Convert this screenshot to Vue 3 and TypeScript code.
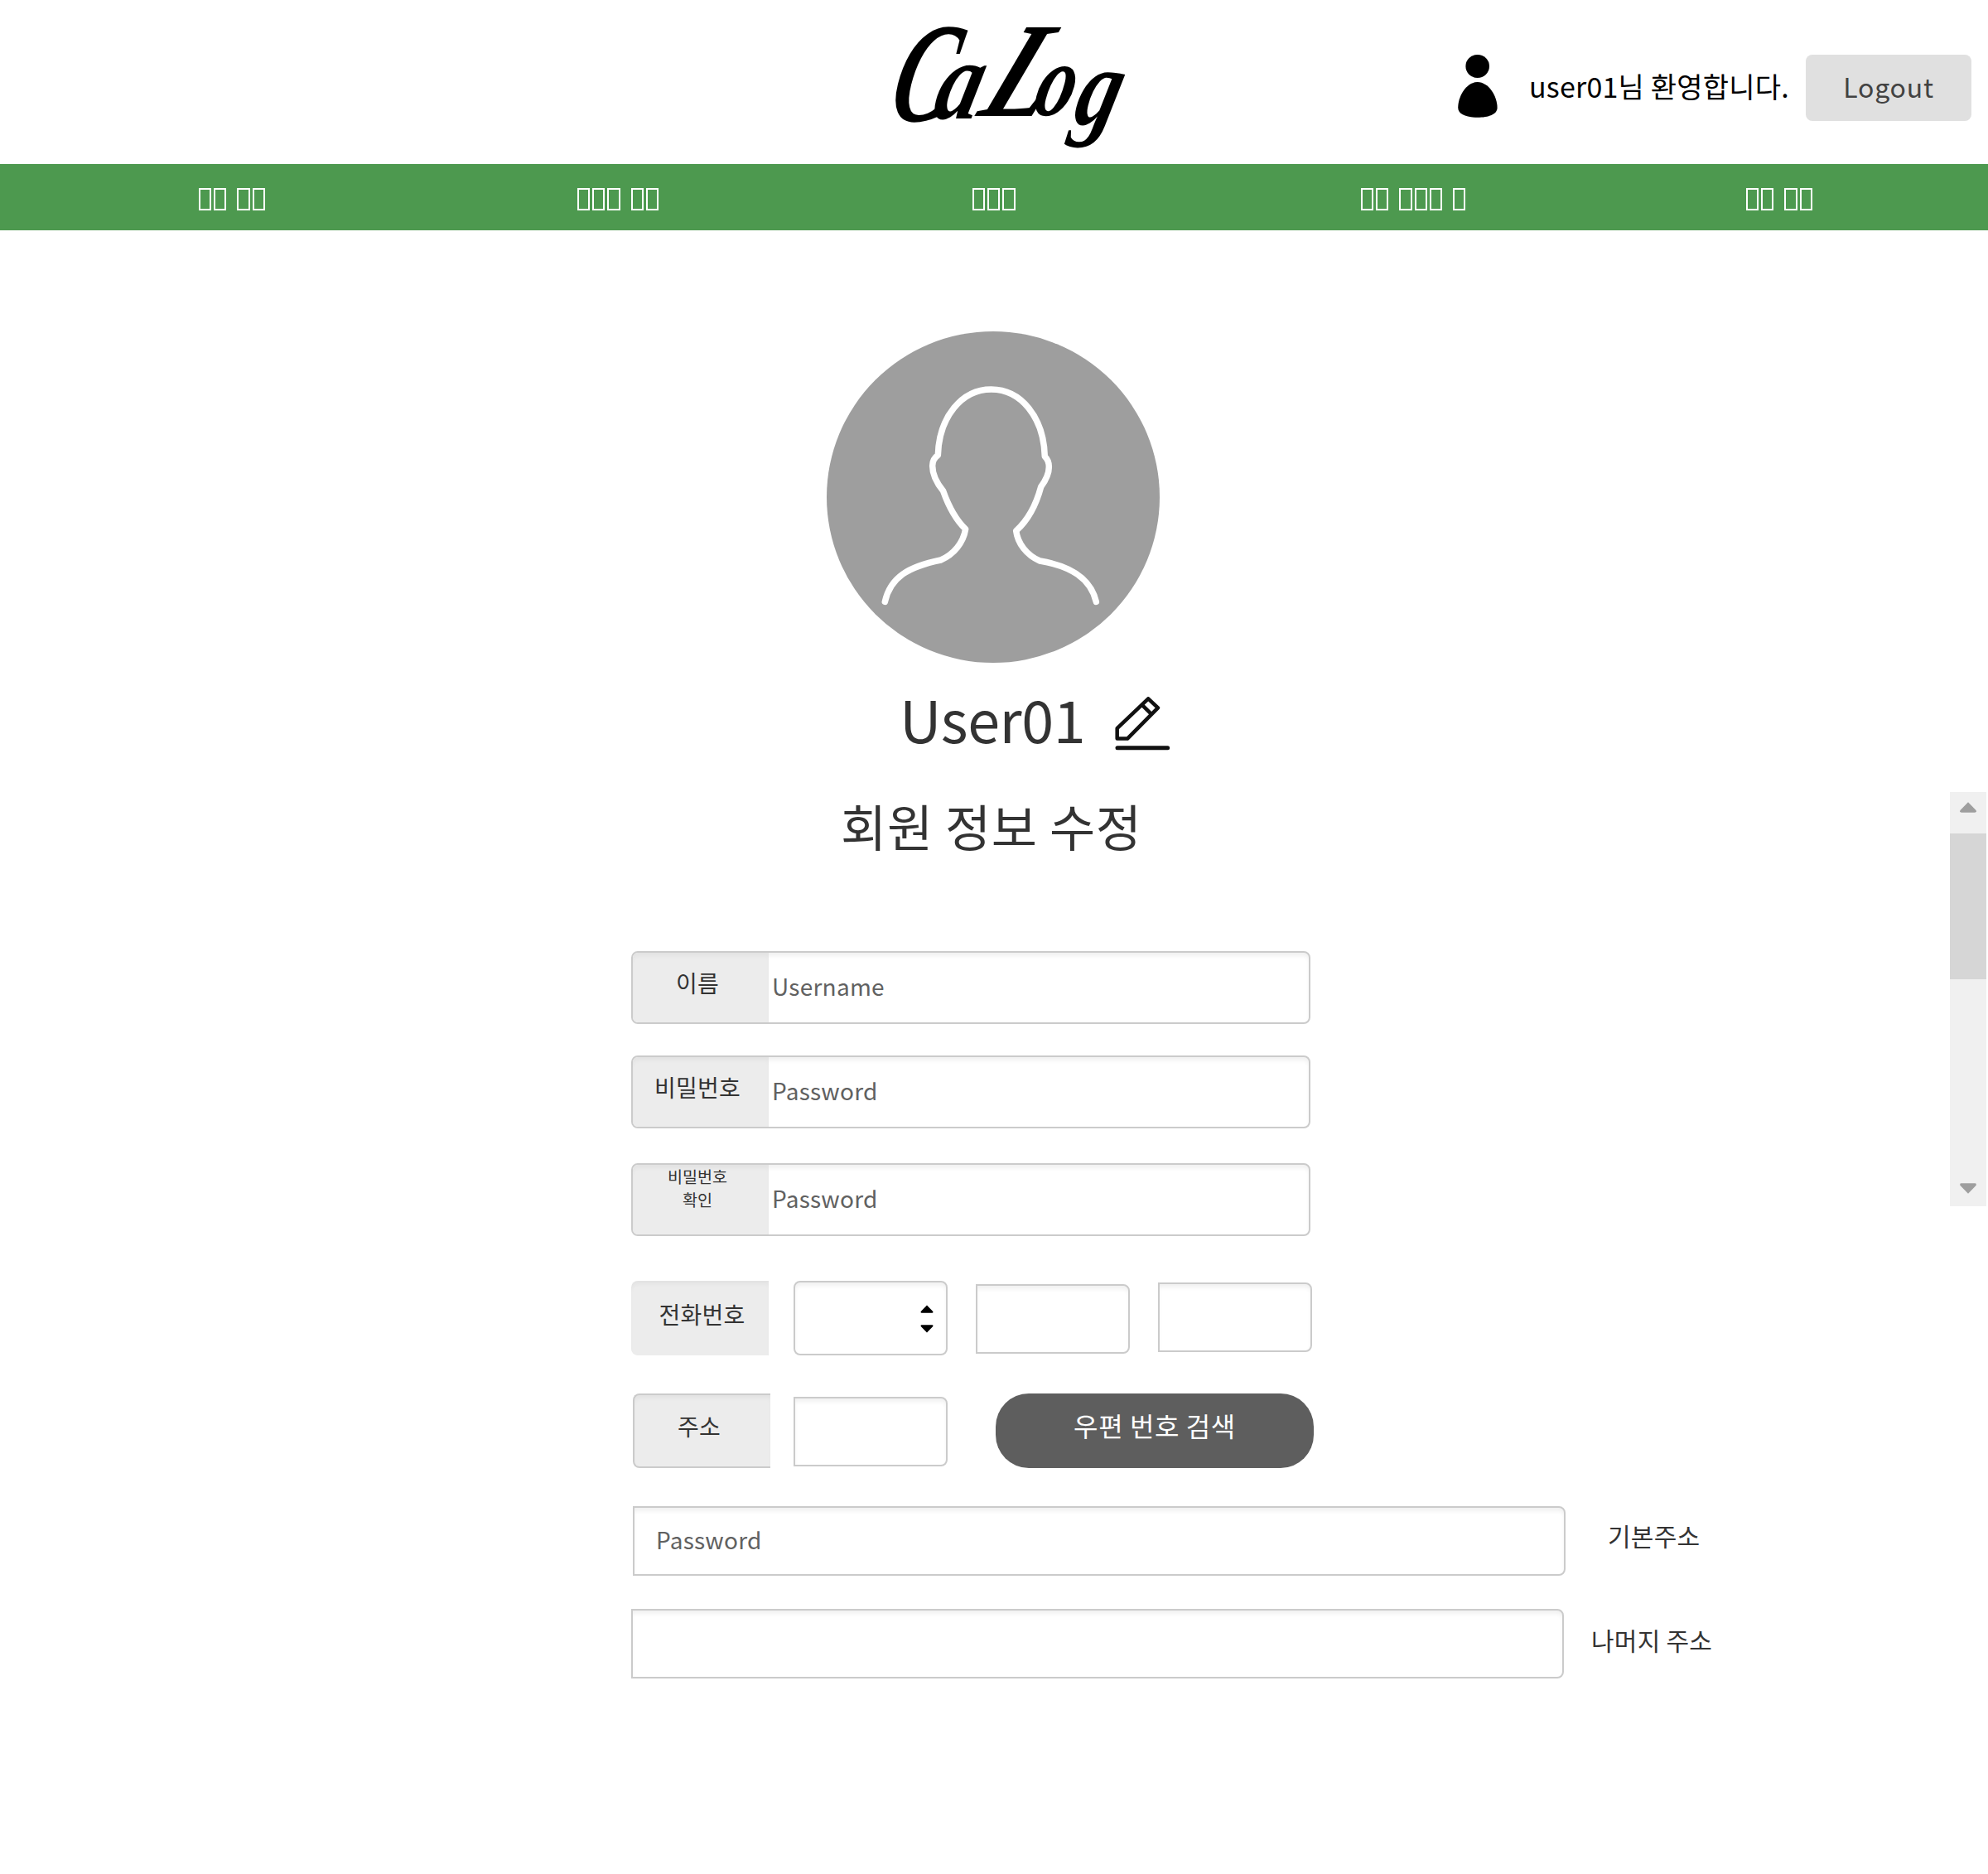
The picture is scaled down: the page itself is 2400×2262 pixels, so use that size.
<script setup lang="ts">
import { ref } from 'vue'

interface Letter { ch: string; transform: string; size: number }
interface Field { id: string; lines: string[]; placeholder: string; small?: boolean }

const letters: Letter[] = [
  { ch: 'C', transform: 'translate(28 408) skewX(-14) scale(.62 1)', size: 515 },
  { ch: 'a', transform: 'translate(190 400) skewX(-14) scale(.8 1)', size: 410 },
  { ch: 'L', transform: 'translate(352 390) skewX(-24) scale(.8 1)', size: 490 },
  { ch: 'o', transform: 'translate(552 388) skewX(-14) scale(.76 1)', size: 375 },
  { ch: 'g', transform: 'translate(698 420) skewX(-14) scale(.8 1)', size: 400 },
]

// Glyph boxes per word of every menu entry
const menu: number[][] = [[2, 2], [3, 2], [3], [2, 3, 1], [2, 2]]

const fields: Field[] = [
  { id: 'name', lines: ['이름'], placeholder: 'Username' },
  { id: 'pw', lines: ['비밀번호'], placeholder: 'Password' },
  { id: 'pw2', lines: ['비밀번호', '확인'], placeholder: 'Password', small: true },
]
const user = ref('user01')
</script>

<template>
  <div class="page">
    <header class="top">
      <svg class="logo" viewBox="0 0 960 570" role="img" aria-label="CaLog">
        <text v-for="l in letters" :key="l.ch" :transform="l.transform" :font-size="l.size">{{ l.ch }}</text>
      </svg>
      <svg class="person" viewBox="0 0 48 76">
        <ellipse cx="23.7" cy="14" rx="14.3" ry="14" />
        <path d="M23.7 33C37 33 47.6 50 47.6 64C47.6 72 37 75.800 23.700 75.800C10.400 75.800 .2 72 .2 64C.2 50 10.400 33 23.700 33Z" />
      </svg>
      <span class="welcome">{{ user }}님 환영합니다.</span>
      <button class="logout">Logout</button>
    </header>

    <nav class="menu">
      <a v-for="(words, i) in menu" :key="i" class="entry">
        <span v-for="(n, w) in words" :key="w" class="word">
          <i v-for="k in n" :key="k"></i>
        </span>
      </a>
    </nav>

    <main>
      <svg class="avatar" viewBox="54 60 1206 1200">
        <ellipse cx="657" cy="660" rx="603" ry="600" fill="#9e9e9e" />
        <path
          d="M265 1039C285 950 350 912 467 888C515 867 549 825 557 776C525 745 498 700 476 638C453 610 437 580 437 547C437 530 444 517 457 508C461 370 543 270 650 270C757 270 840 370 844 513C854 522 859 534 859 551C859 576 848 598 830 623C812 690 779 747 740 782C746 828 778 870 826 891C940 910 1010 955 1030 1039"
          fill="none" stroke="#fff" stroke-width="22.500" stroke-linecap="round" stroke-linejoin="round"
        />
      </svg>

      <div class="who">
        <span class="uname">User01</span>
        <svg class="pencil" viewBox="0 0 200 200" fill="none" stroke="#111">
          <path d="M8 114V151H45L155 40L120 7ZM97 29L131 62" stroke-width="13.500" stroke-linejoin="round" />
          <path d="M9 184H190" stroke-width="15" stroke-linecap="round" />
        </svg>
      </div>
      <h1>회원 정보 수정</h1>

      <form class="form">
        <div v-for="f in fields" :key="f.id" class="field" :class="f.id">
          <label class="tag" :class="{ small: f.small }">
            <span v-for="t in f.lines" :key="t">{{ t }}</span>
          </label>
          <span class="hint">{{ f.placeholder }}</span>
        </div>

        <div class="row phone">
          <label class="tag solo plain">전화번호</label>
          <div class="cell select">
            <svg viewBox="0 0 16 34">
              <path d="M8 .5L15.300 8Q16 9.800 14.500 9.800H1.500Q0 9.800 .7 8Z" />
              <path d="M8 33.500L15.300 26Q16 24.200 14.500 24.200H1.500Q0 24.200 .7 26Z" />
            </svg>
          </div>
          <div class="cell mid"></div>
          <div class="cell last"></div>
        </div>

        <div class="row zip">
          <label class="tag solo outlined">주소</label>
          <div class="cell code"></div>
          <button type="button" class="search">우편 번호 검색</button>
        </div>

        <div class="row addr first">
          <div class="cell wide"><span>Password</span></div>
          <span class="note">기본주소</span>
        </div>
        <div class="row addr second">
          <div class="cell wide"></div>
          <span class="note">나머지 주소</span>
        </div>
      </form>
    </main>

    <aside class="scroll">
      <svg viewBox="0 0 20 13"><path d="M10 .3L19.500 10Q20.600 12.700 18 12.700H2Q-.6 12.700 .5 10Z" /></svg>
      <div class="thumb"></div>
      <svg class="down" viewBox="0 0 20 13"><path d="M10 12.700L19.500 3Q20.600 .3 18 .3H2Q-.6 .3 .5 3Z" /></svg>
    </aside>
  </div>
</template>

<style>
body { background: #fff; }
</style>

<style scoped>
* { box-sizing: border-box; }
.page {
  position: relative;
  width: 2400px;
  height: 2262px;
  background: #fff;
  color: #333;
  font-family: "Noto Sans CJK KR", sans-serif;
}
button { border: 0; padding: 0; font-family: inherit; }
.top { display: flex; height: 198px; }
.logo { width: 320px; height: 190px; margin: 10px 0 0 1060px; overflow: visible; }
.logo text { font-family: "Liberation Serif", serif; font-weight: 700; font-style: italic; fill: #000; }
.person { width: 48px; height: 76px; margin: 66px 0 0 380px; }
.welcome { width: 334px; margin: 79px 0 0 38px; line-height: 50px; font-size: 34px; letter-spacing: .2px; color: #000; white-space: nowrap; }
.logout { width: 200px; height: 80px; margin-top: 66px; padding-bottom: 4px; border-radius: 8px; background: #e0e0e0; color: #424242; font-size: 32px; letter-spacing: .8px; }
.menu {
  display: grid;
  grid-template-columns: 457px 477px 469px 465px auto;
  align-items: center;
  height: 80px;
  padding: 4px 0 0 240px;
  background: #4d994f;
}
.entry { display: flex; gap: 13px; }
.word { display: flex; gap: 3px; }
.word i { width: 15.2px; height: 27px; border: 2px solid #fff; }
.avatar { display: block; width: 402px; height: 400px; margin: 122px 0 0 998px; }
.who { display: flex; margin: 27px 0 0 1086px; height: 79px; }
.uname { width: 260px; font-size: 70px; line-height: 80px; letter-spacing: -.4px; }
.pencil { width: 67px; height: 67px; margin-top: 14px; }
h1 { margin: 50px 0 0 1015px; font-size: 60px; font-weight: 400; line-height: 80px; letter-spacing: .7px; }
.form { margin: 112px 0 0 762px; }
.field, .cell {
  display: flex;
  border: 2px solid #cbcbcb;
  border-radius: 8px;
  box-shadow: inset 0 5px 5px -1px rgba(0, 0, 0, .06);
}
.field { width: 820px; height: 88px; }
.pw { margin-top: 38px; }
.pw2 { margin-top: 42px; }
.tag {
  display: flex;
  flex-direction: column;
  justify-content: center;
  align-items: center;
  width: 164px;
  padding: 0 8px 12px 0;
  border-radius: 6px 0 0 6px;
  background: #ececec;
  box-shadow: inset 0 5px 5px -1px rgba(0, 0, 0, .04);
  font-size: 28px;
  line-height: 40px;
  letter-spacing: .3px;
}
.tag.small { justify-content: flex-start; padding: 0 8px 0 0; font-size: 19.6px; line-height: 28px; letter-spacing: 0; }
.hint { padding-left: 4px; color: #616161; font-size: 28px; line-height: 80px; letter-spacing: .25px; }
.row { display: flex; align-items: flex-start; }
.solo { width: 166px; height: 90px; border-radius: 8px 0 0 8px; }
.tag.plain { padding: 0 0 10px 5px; }
.tag.outlined { padding-bottom: 13px; border: 2px solid #cbcbcb; border-right: 0; }
.phone { margin-top: 54px; }
.cell { width: 186px; height: 84px; border-radius: 0 8px 8px 0; }
.select { height: 90px; margin-left: 30px; border-radius: 8px; justify-content: flex-end; }
.select svg { width: 16px; height: 34px; margin: 27px 15px 0 0; }
.mid { margin: 4px 0 0 34px; }
.last { margin: 2px 0 0 34px; }
.zip { margin: 46px 0 0 2px; }
.code { margin: 4px 0 0 28px; }
.search { width: 384px; height: 90px; margin-left: 58px; padding-bottom: 14px; border-radius: 40px; background: #5e5e5e; color: #fff; font-size: 32px; letter-spacing: .6px; }
.wide { width: 1126px; padding-left: 26px; color: #616161; font-size: 28px; line-height: 76px; letter-spacing: .25px; }
.first { margin: 46px 0 0 2px; }
.second { margin-top: 40px; }
.note { font-size: 30px; line-height: 44px; letter-spacing: .25px; margin: 13px 0 0 51px; }
.second .note { margin: 15px 0 0 33px; }
.scroll { position: absolute; left: 2354px; top: 956px; width: 44px; height: 500px; background: #f0f0f0; display: flex; flex-direction: column; align-items: center; }
.scroll svg { width: 20px; height: 13px; margin-top: 12px; fill: #9e9e9e; }
.thumb { width: 44px; height: 176px; margin-top: 25px; background: #d6d6d6; }
.scroll .down { margin-top: 246px; }
</style>
